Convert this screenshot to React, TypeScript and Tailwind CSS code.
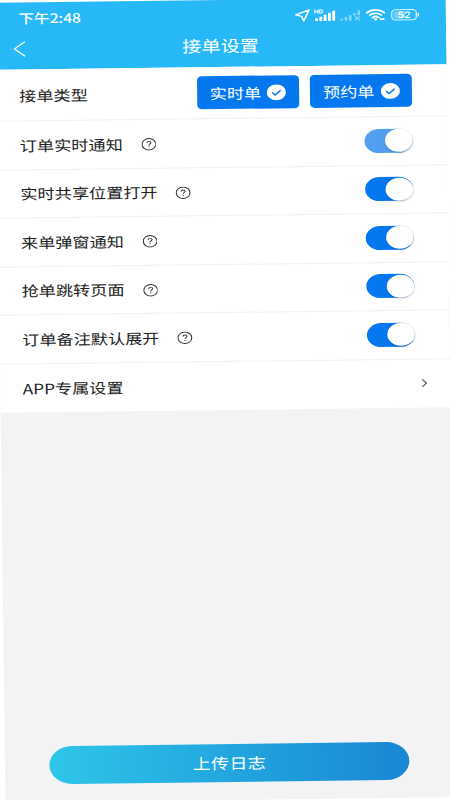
import { useState } from "react"

const settings = [
  { label: "订单实时通知", pending: true },
  { label: "实时共享位置打开", pending: false },
  { label: "来单弹窗通知", pending: false },
  { label: "抢单跳转页面", pending: false },
  { label: "订单备注默认展开", pending: false },
]

const StatusBar = () => {
  return (
    <div className="h-[33px] flex items-center pl-[18.8px] pr-[21.8px]">
      <div className="text-[13px] font-[500] leading-[16px] flex-1 pb-[2px]">下午2:48</div>
      <svg className="w-[13px] h-[13px] mr-[3px]" viewBox="0 0 13 13" fill="none" stroke="currentColor" strokeWidth="1.3" strokeLinejoin="round">
        <path d="M12 1 1 5.8l4.8 1.5L7.6 12z" />
      </svg>
      <svg className="w-[19px] h-[13px] mr-[3px]" viewBox="0 0 19 13" fill="currentColor">
        <text x="0" y="4.6" fontSize="5.4" fontWeight="700" fontFamily="Inter, sans-serif">HD</text>
        <rect x="1" y="9.4" width="2.4" height="2.8" rx=".5" />
        <rect x="4.6" y="8" width="2.4" height="4.2" rx=".5" />
        <rect x="8.2" y="6" width="2.4" height="6.2" rx=".5" />
        <rect x="11.8" y="4" width="2.4" height="8.2" rx=".5" />
        <rect x="15.4" y="2" width="2.4" height="10.2" rx=".5" />
      </svg>
      <svg className="w-[18px] h-[13px] mr-[3px]" viewBox="0 0 18 13" fill="currentColor" opacity=".45">
        <rect x="0" y="10" width="2.2" height="2" rx=".5" />
        <rect x="3.6" y="8.6" width="2.2" height="3.4" rx=".5" />
        <rect x="7.2" y="6.6" width="2.2" height="5.4" rx=".5" />
        <rect x="10.8" y="4.6" width="2.2" height="2.4" rx=".5" />
        <rect x="14.4" y="2" width="2.2" height="5" rx=".5" />
        <path d="m12.2 8 4 4m0-4-4 4" stroke="currentColor" strokeWidth="1.3" />
      </svg>
      <svg className="w-[17px] h-[13px] mr-[4px]" viewBox="0 0 17 13" fill="none" stroke="currentColor" strokeWidth="1.6" strokeLinecap="round">
        <path d="M1.2 4.6c4-3.8 10.6-3.8 14.6 0M3.6 7.1c2.8-2.6 7-2.6 9.8 0M5.9 9.4c1.6-1.4 3.6-1.4 5.2 0" />
        <circle cx="8.5" cy="11.2" r=".6" fill="currentColor" />
        <path d="M12.6 11h2.6" strokeWidth="1.8" />
      </svg>
      <svg className="w-[24px] h-[12px]" viewBox="0 0 24 12">
        <rect x="1" y=".9" width="20.4" height="10.2" rx="3" fill="none" stroke="currentColor" strokeOpacity=".85" />
        <rect x="2.6" y="2.5" width="9.5" height="7" rx="1.4" fill="currentColor" fillOpacity=".35" />
        <rect x="22.4" y="4.2" width="1.2" height="3.6" rx=".6" fill="currentColor" />
        <text x="11.2" y="9.2" textAnchor="middle" fontSize="8.8" fontWeight="600" fontFamily="Inter, sans-serif" fill="currentColor">52</text>
      </svg>
    </div>
  )
}

const TypeButton = ({ label }: { label: string }) => {
  return (
    <button className="w-[85px] h-[32.5px] rounded-[4px] bg-[#0578f0] text-white flex items-center justify-center gap-[5px]">
      <span>{label}</span>
      <svg className="w-[16px] h-[16px]" viewBox="0 0 16 16">
        <circle cx="8" cy="8" r="8" fill="#fff" />
        <path d="m4.4 8 2.5 2.6 4.7-4.7" fill="none" stroke="#0578f0" strokeWidth="1.3" />
      </svg>
    </button>
  )
}

const HelpIcon = () => {
  return (
    <svg className="w-[12.6px] h-[12.6px] ml-[15.2px] mt-[2px]" viewBox="0 0 14 14" fill="none" stroke="#333" strokeWidth="1">
      <circle cx="7" cy="7" r="6.4" />
      <path d="M5.2 5.6C5.2 3.3 8.9 3.4 8.8 5.5 8.7 6.7 7 6.8 7 8.3" />
      <path d="M7 9.4v1.1" />
    </svg>
  )
}

const SettingRow = ({ label, pending }: { label: string; pending: boolean }) => {
  const [on, setOn] = useState(true)

  return (
    <div className="h-[48.5px] flex items-center pl-[18.7px] pr-[28.7px] border-b border-[#f0f0f2]">
      <span>{label}</span>
      <HelpIcon />
      <button
        onClick={() => setOn(!on)}
        className={`ml-auto w-[40px] h-[24px] rounded-full p-[0.5px] flex items-center ${
          on ? "justify-end" : "justify-start"
        } ${pending ? "bg-[#519fee]" : "bg-[#0578f0]"}`}
      >
        <span className="w-[23px] h-[23px] rounded-full bg-white shadow-[0_1px_2px_rgba(0,0,0,0.2)]" />
      </button>
    </div>
  )
}

export default function App() {
  return (
    <div className="w-[450px] h-[800px] overflow-hidden bg-white flex justify-center">
      <div className="w-[375px] h-[800px] shrink-0 flex flex-col bg-[#f3f3f5] text-[14.3px] leading-[20px] text-[#222] font-['Noto_Sans_CJK_SC',sans-serif] [transform:rotate(-0.7deg)_scaleX(1.2)]">
        <header className="h-[67px] bg-[#27b8f8] text-white">
          <StatusBar />
          <div className="h-[34px] pb-[7px] grid grid-cols-[60px_1fr_60px] items-center">
            <svg className="w-[11px] h-[17px] ml-[14.3px]" viewBox="0 0 11 17" fill="none" stroke="currentColor" strokeWidth="1.2">
              <path d="M10 1.2 1.2 8.5 10 15.8" />
            </svg>
            <h1 className="text-[16px] text-center pb-[3px] pr-[1px]">接单设置</h1>
          </div>
        </header>

        <main className="bg-white">
          <div className="h-[52px] flex items-center pl-[18.7px] pr-[28.7px] border-b border-[#f0f0f2]">
            <span className="flex-1">接单类型</span>
            <div className="flex gap-[9.4px]">
              <TypeButton label="实时单" />
              <TypeButton label="预约单" />
            </div>
          </div>
          {settings.map((item) => (
            <SettingRow key={item.label} label={item.label} pending={item.pending} />
          ))}
          <div className="h-[48px] flex items-center justify-between pl-[18.7px] pr-[18.7px]">
            <span>APP专属设置</span>
            <svg className="w-[5px] h-[9px]" viewBox="0 0 5 9" fill="none" stroke="#555" strokeWidth="1">
              <path d="m.6.8 3.6 3.7L.6 8.2" />
            </svg>
          </div>
        </main>

        <button className="mt-auto mb-[18px] ml-[36.5px] w-[300px] h-[38px] rounded-full bg-linear-to-r from-[#2fc6e8] to-[#1a86d4] text-white text-[15px] tracking-[0.3px] pl-[1px]">
          上传日志
        </button>
      </div>
    </div>
  )
}
